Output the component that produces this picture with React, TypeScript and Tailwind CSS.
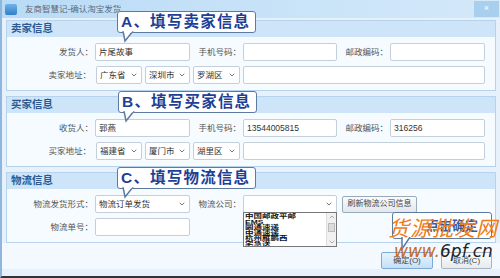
import { ChevronDown, ChevronUp } from "lucide-react";

const Label = ({ text, w }: { text: string; w: string }) => (
  <span className={`${w} shrink-0 text-right pr-[2px] text-[8.5px] text-[#555]`}>{text}</span>
);

const Input = ({ w, value = "" }: { w: string; value?: string }) => (
  <div
    className={`${w} h-[18px] shrink-0 bg-white border border-[#c3d0dc] rounded-[2px] px-[3px] flex items-center text-[8.5px] text-[#333]`}
  >
    {value}
  </div>
);

const Select = ({ w, value = "" }: { w: string; value?: string }) => (
  <div
    className={`${w} h-[18px] shrink-0 bg-white border border-[#c3d0dc] rounded-[2px] pl-[3px] pr-[3px] flex items-center justify-between text-[8.5px] text-[#333]`}
  >
    <span>{value}</span>
    <ChevronDown size={8} strokeWidth={3} className="text-[#777]" />
  </div>
);

const Section = ({ title, children }: { title: string; children: React.ReactNode }) => (
  <div className="border border-[#b6d2ec] bg-[#f6fbff]">
    <div className="h-[16px] bg-[#cde4f9] flex items-center pl-[4px] text-[10.5px] font-bold text-[#2a5a92]">
      {title}
    </div>
    <div className="flex flex-col gap-[5px] pt-[6px] pb-[6px]">{children}</div>
  </div>
);

const Bubble = ({ text, className }: { text: string; className: string }) => (
  <div className={`absolute ${className}`}>
    <div className="relative h-[22px] w-[139px] bg-white border-[1.5px] border-[#5d7aa3] rounded-[3px] flex items-center pl-[3px] text-[15.5px] font-bold text-[#1d3f96] tracking-[1.2px] whitespace-nowrap">
      {text}
    </div>
    <svg className="absolute left-[4px] top-[20px]" width="16" height="12" viewBox="0 0 16 12">
      <path d="M2 0 L4 10 L12 0" fill="white" stroke="#5d7aa3" strokeWidth="1.5" />
      <rect x="2.8" y="0" width="8.5" height="1.2" fill="white" />
    </svg>
  </div>
);

const couriers = ["中国邮政平邮", "EMS", "圆通速递", "中通速递", "杭州雁鹏西", "宅急送"];

export default function App() {
  return (
    <div className="relative w-[500px] h-[278px] overflow-hidden bg-[#e6f1fb] border-l-[2px] border-[#8fb7de] border-b-[2px] border-b-[#333] font-['Liberation_Sans','Noto_Sans_CJK_SC',sans-serif]">
      {/* title bar */}
      <div className="h-[18px] flex items-center bg-gradient-to-r from-[#b9dbf6] to-[#d4e9fa]">
        <div className="ml-[3px] w-[12px] h-[11px] rounded-[2px] bg-gradient-to-b from-[#6fb3ea] to-[#2f7fc8]" />
        <span className="ml-[8px] text-[8.5px] text-[#5b6a7a]">友商智慧记-确认淘宝发货</span>
        <div className="ml-auto mr-[1px] w-[25px] h-[16px] bg-[#a9cfee] flex items-center justify-center text-[9px] text-white">
          ×
        </div>
      </div>

      <div className="flex flex-col gap-[5px] pl-[4px] pr-[4px] pt-[2px]">
        <Section title="卖家信息">
          <div className="flex items-center">
            <Label text="发货人：" w="w-[88px]" />
            <Input w="w-[95px]" value="片尾故事" />
            <Label text="手机号码：" w="w-[53px]" />
            <Input w="w-[94px]" />
            <Label text="邮政编码：" w="w-[53px]" />
            <Input w="w-[95px]" />
          </div>
          <div className="flex items-center gap-[3px]">
            <Label text="卖家地址：" w="w-[86px]" />
            <Select w="w-[46px]" value="广东省" />
            <Select w="w-[45px]" value="深圳市" />
            <Select w="w-[47px]" value="罗湖区" />
            <Input w="w-[242px]" />
          </div>
        </Section>

        <Section title="买家信息">
          <div className="flex items-center">
            <Label text="收货人：" w="w-[88px]" />
            <Input w="w-[95px]" value="郭燕" />
            <Label text="手机号码：" w="w-[53px]" />
            <Input w="w-[94px]" value="13544005815" />
            <Label text="邮政编码：" w="w-[53px]" />
            <Input w="w-[95px]" value="316256" />
          </div>
          <div className="flex items-center gap-[3px]">
            <Label text="买家地址：" w="w-[86px]" />
            <Select w="w-[46px]" value="福建省" />
            <Select w="w-[45px]" value="厦门市" />
            <Select w="w-[47px]" value="湖里区" />
            <Input w="w-[242px]" />
          </div>
        </Section>

        <Section title="物流信息">
          <div className="flex items-center">
            <Label text="物流发货形式：" w="w-[88px]" />
            <Select w="w-[95px]" value="物流订单发货" />
            <Label text="物流公司：" w="w-[53px]" />
            <div className="relative">
              <Select w="w-[94px]" />
              <div className="absolute left-0 top-[17px] w-[94px] h-[35px] bg-white border border-[#777] flex z-10">
                <div className="flex-1 overflow-hidden flex flex-col text-[8.5px] font-bold text-[#111] pl-[1px]">
                  {couriers.map((c) => (
                    <span key={c} className="h-[5.6px] leading-[8px] whitespace-nowrap scale-y-[0.68] origin-top">
                      {c}
                    </span>
                  ))}
                </div>
                <div className="w-[10px] flex flex-col bg-[#f1f1f1] border-l border-[#ddd]">
                  <ChevronUp size={8} strokeWidth={2} className="mx-auto text-[#888]" />
                  <div className="mt-[2px] mx-[1px] h-[9px] bg-[#dcdcdc] border border-[#bbb]" />
                  <ChevronDown size={8} strokeWidth={2} className="mx-auto mt-auto text-[#888]" />
                </div>
              </div>
            </div>
            <div className="ml-[5px] w-[75px] h-[17px] border border-[#9ab] rounded-[2px] bg-gradient-to-b from-[#fafafa] to-[#e3e8ed] flex items-center justify-center text-[8px] text-[#444]">
              刷新物流公司信息
            </div>
          </div>
          <div className="flex items-center">
            <Label text="物流单号：" w="w-[88px]" />
            <Input w="w-[95px]" />
          </div>
        </Section>
      </div>

      {/* footer */}
      <div className="flex justify-end gap-[8px] pr-[8px] pt-[9px] bg-[#f3f9fe]">
        <div className="w-[52px] h-[17px] rounded-[2px] border border-[#7ea8d6] bg-gradient-to-b from-[#e6f3fd] to-[#c4e0f8] flex items-center justify-center text-[8px] text-[#444]">
          确定(O)
        </div>
        <div className="w-[51px] h-[17px] rounded-[2px] border border-[#a9b6c2] bg-gradient-to-b from-[#fbfbfb] to-[#e7ebee] flex items-center justify-center text-[8px] text-[#444]">
          取消(C)
        </div>
      </div>

      {/* callouts */}
      <Bubble text="A、填写卖家信息" className="left-[115px] top-[11px]" />
      <Bubble text="B、填写买家信息" className="left-[116px] top-[91px]" />
      <Bubble text="C、填写物流信息" className="left-[115px] top-[167px]" />

      <div className="absolute left-[390px] top-[212px]">
        <div className="h-[27px] w-[100px] bg-white/90 border-[1.5px] border-[#5d7aa3] rounded-[3px] flex items-center justify-center pl-[20px] text-[13px] font-bold text-[#3a5a9e]">
          点击确定
        </div>
        <svg className="absolute left-[6px] top-[25px]" width="16" height="14" viewBox="0 0 16 14">
          <path d="M4 0 L4 12 L12 0" fill="white" stroke="#5d7aa3" strokeWidth="1.5" />
        </svg>
      </div>

      {/* watermark */}
      <div className="absolute left-[386px] top-[214px] text-[21px] leading-[26px] text-[#f07b17] font-['Noto_Sans_CJK_SC',sans-serif] tracking-[1px] italic">
        货源批发网
      </div>
      <div className="absolute left-[392px] top-[240px] text-[17px] leading-[22px] font-['DejaVu_Sans',sans-serif] italic">
        <span className="text-[#c46a1c]">www.</span>
        <span className="text-[#222]">6pf.cn</span>
      </div>
    </div>
  );
}
